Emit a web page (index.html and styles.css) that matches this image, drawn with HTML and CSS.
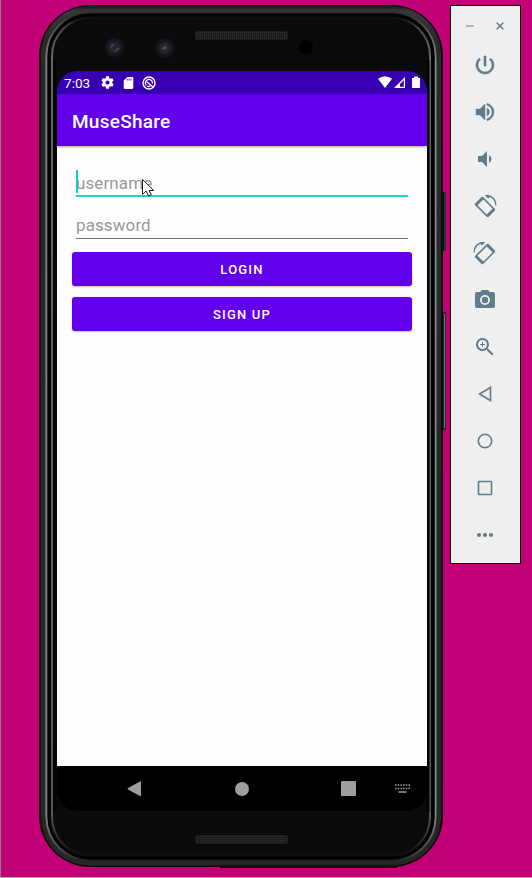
FILE: index.html
```html
<!DOCTYPE html>
<html lang="en">
<head>
<meta charset="utf-8">
<title>MuseShare</title>
<link rel="stylesheet" href="styles.css">
</head>
<body>
<main class="desktop">
  <section class="phone">
    <svg class="frame" viewBox="39 5 407 863" aria-hidden="true">
      <defs>
        <pattern id="mesh" width="2" height="2" patternUnits="userSpaceOnUse"><rect width="2" height="2" fill="#1c1c1c"/><rect width="1" height="1" fill="#303030"/></pattern>
        <linearGradient id="rim" gradientUnits="userSpaceOnUse" x1="0" y1="12" x2="0" y2="862"><stop offset="0" stop-color="#2c2c2c"/><stop offset=".012" stop-color="#484848"/><stop offset=".06" stop-color="#888"/><stop offset=".94" stop-color="#888"/><stop offset=".988" stop-color="#484848"/><stop offset="1" stop-color="#202020"/></linearGradient>
        <linearGradient id="inner" gradientUnits="userSpaceOnUse" x1="0" y1="17" x2="0" y2="857"><stop offset="0" stop-color="#0a0a0a"/><stop offset=".012" stop-color="#444"/><stop offset=".04" stop-color="#646468"/><stop offset=".95" stop-color="#555558"/><stop offset=".985" stop-color="#222"/><stop offset="1" stop-color="#0a0a0a"/></linearGradient>
        <linearGradient id="body" gradientUnits="userSpaceOnUse" x1="0" y1="5" x2="0" y2="868"><stop offset="0" stop-color="#141414"/><stop offset=".007" stop-color="#383838"/><stop offset=".04" stop-color="#292929"/><stop offset="1" stop-color="#262626"/></linearGradient>
      </defs>
      <rect x="441" y="192" width="5" height="59" rx="1" fill="#303030"/>
      <path d="M443.500 192v59" stroke="#111"/>
      <rect x="442" y="312" width="4" height="118" rx="1" fill="#252525"/>
      <path d="M444.500 314v114" stroke="#777"/>
      <rect x="39" y="5" width="404" height="862" rx="51" fill="#0c0c0c"/>
      <rect x="41" y="6" width="400" height="859.500" rx="49" fill="url(#body)"/>
      <rect x="46.500" y="12.500" width="389" height="848" rx="43.500" fill="#0a0a0a" stroke="url(#rim)" stroke-width="2"/>
      <rect x="49" y="15" width="384" height="843" rx="41" fill="none" stroke="#030303" stroke-width="3"/>
      <rect x="52" y="17.500" width="378" height="838" rx="38.500" fill="#0a0a0a" stroke="url(#inner)" stroke-width="2"/>
      <path d="M55 60V812M428 60V812" stroke="#040404" stroke-width="3"/>
      <path d="M220 867.500H397" stroke="#080808"/>
      <g fill="#14181c"><circle cx="114.500" cy="47.500" r="9.500"/><circle cx="165" cy="48" r="9.500"/></g>
      <g fill="#22262a"><circle cx="114.500" cy="47.500" r="6"/><circle cx="165" cy="48" r="6"/></g>
      <path d="M111 47l3-3M115 51l4-3M162 49l3-3" stroke="#4a535c" stroke-width="1.200"/>
      <circle cx="165" cy="48" r="2" fill="#484848"/>
      <circle cx="306" cy="47.500" r="7" fill="#000"/>
      <rect x="195" y="31" width="93" height="9" rx="3" fill="url(#mesh)"/>
      <rect x="195" y="835" width="93" height="9" rx="3" fill="url(#mesh)"/>
    </svg>
    <div class="screen">
      <header class="status">
        <span class="time">7:03</span>
        <svg class="s-icon gear" viewBox="2 2 20 20"><path d="M19.140 12.940c.040-.300.060-.610.060-.940s-.020-.640-.070-.940l2.030-1.580a.490.490 0 0 0 .120-.610l-1.920-3.320a.490.490 0 0 0-.590-.220l-2.390.960a7 7 0 0 0-1.620-.940L14.400 2.810a.480.480 0 0 0-.480-.410h-3.840c-.240 0-.430.170-.470.410l-.360 2.540c-.590.240-1.130.570-1.620.940l-2.390-.960a.480.480 0 0 0-.590.220L2.740 8.870a.480.480 0 0 0 .120.610l2.030 1.580a7.300 7.300 0 0 0 0 1.880l-2.030 1.580a.490.490 0 0 0-.120.610l1.920 3.320c.120.220.370.290.590.220l2.390-.960c.500.380 1.030.700 1.620.940l.360 2.540c.050.240.240.410.480.410h3.840c.240 0 .440-.170.470-.410l.360-2.540c.590-.240 1.130-.560 1.620-.940l2.390.960c.220.080.470 0 .590-.220l1.920-3.320a.480.480 0 0 0-.120-.610zM12 15.200a3.200 3.200 0 1 1 0-6.400 3.200 3.200 0 0 1 0 6.400z"/></svg>
        <svg class="s-icon sd" viewBox="4 2 16 20"><path fill-rule="evenodd" d="M18 2h-8L4 8v12c0 1.100.900 2 2 2h12c1.100 0 2-.900 2-2V4c0-1.100-.900-2-2-2zM9 5h1.500v3H9zm3.200 0h1.500v3h-1.500zm3 0h1.500v3h-1.500z"/></svg>
        <svg class="s-icon sync" viewBox="0 0 14 14"><circle cx="7" cy="7" r="6" fill="none" stroke="#fff" stroke-width="1.400"/><path d="M4.200 9.300A3.600 3.600 0 0 1 5 4 3.600 3.600 0 0 1 10.500 7.500M4.800 5.800L11 11M5 10Q6.500 11 8.300 10" fill="none" stroke="#fff" stroke-width="1.300"/></svg>
        <span class="spacer"></span>
        <svg class="signals" width="42" height="13" viewBox="0 0 42 13"><path d="M0 2.800Q7-2.200 14 2.800L7 12z"/><path fill-rule="evenodd" d="M27 1V12H16zM25.800 4L22 8v2.800H25.800z"/><path d="M34 2h2V.500h4V2h2v10h-8z"/></svg>
      </header>
      <div class="appbar"><h1>MuseShare</h1></div>
      <form class="login">
        <div class="field focused"><span>username</span></div>
        <div class="field"><span>password</span></div>
        <button type="button">LOGIN</button>
        <button type="button">SIGN UP</button>
        <svg class="cursor" viewBox="0 0 13 18"><path d="M.5.500V15.500L4 12L6.700 17L9.300 15.700L7 11.500H11.800Z" fill="#fff" stroke="#181818"/></svg>
      </form>
      <nav class="nav">
        <svg viewBox="0 0 14 16"><path d="M1 7L13 .500Q14 0 14 1V14.500Q14 15.500 13 15L1 8.500Q0 7.800 1 7z"/></svg>
        <svg viewBox="0 0 14 14"><circle cx="7" cy="7" r="7"/></svg>
        <svg viewBox="0 0 15 15"><rect width="15" height="15" rx="1"/></svg>
        <svg class="keyboard" viewBox="0 0 15 9"><path d="M0 1h15M0 4.500h15" stroke="#a0a0a0" stroke-width="1.300" stroke-dasharray="1.500 1.200"/><path d="M3.500 8h8" stroke="#a0a0a0" stroke-width="1.300"/></svg>
      </nav>
    </div>
  </section>
  <aside class="toolbar">
    <div class="window-controls">
      <svg viewBox="0 0 8 8"><path d="M0 4h8" stroke="#9badb7" stroke-width="1.600"/></svg>
      <svg viewBox="0 0 8 8"><path d="M.7.700l6.600 6.600M7.300.700L.7 7.300" stroke="#607d8b" stroke-width="1.500"/></svg>
    </div>
    <svg viewBox="0 0 24 24"><path d="M13 3h-2v10h2V3zm4.830 2.170l-1.420 1.420A6.920 6.920 0 0 1 19 12a7 7 0 1 1-11.420-5.420L6.170 5.170A9 9 0 1 0 21 12a9 9 0 0 0-3.170-6.830z" stroke="#607d8b" stroke-width=".6"/></svg>
    <svg viewBox="0 0 24 24"><path d="M3 9v6h4l5 5V4L7 9H3zm13.500 3A4.500 4.500 0 0 0 14 7.970v8.050A4.470 4.470 0 0 0 16.500 12zM14 3.230v2.060a7 7 0 0 1 0 13.420v2.060a9 9 0 0 0 0-17.540z" stroke="#607d8b" stroke-width=".5"/></svg>
    <svg viewBox="0 0 24 24"><path d="M18.500 12A4.500 4.500 0 0 0 16 7.970v8.050A4.470 4.470 0 0 0 18.500 12zM5 9v6h4l5 5V4L9 9H5z"/></svg>
    <svg class="rotate" viewBox="0 0 24 24"><g id="rotated"><g transform="translate(12 13) rotate(45)"><path fill-rule="evenodd" d="M-8.300-5.700H8.300Q9.500-5.700 9.500-4.500V4.500Q9.500 5.700 8.300 5.700H-8.300Q-9.500 5.700-9.500 4.500V-4.500Q-9.500-5.700-8.300-5.700zM-6.500-4.200V4.200H6.500V-4.200z"/></g><path d="M13 1.500Q22.400 2 22.900 11.500" fill="none" stroke="#607d8b" stroke-width="1.300"/><path d="M11.500 1.200L17 1.500L15.500 4.700z"/></g></svg>
    <svg class="rotate" viewBox="0 0 24 24"><use href="#rotated" transform="matrix(-1 0 0 1 24 0)"/></svg>
    <svg viewBox="0 0 24 24"><path d="M9 2L7.170 4H4c-1.100 0-2 .900-2 2v12c0 1.100.900 2 2 2h16c1.100 0 2-.900 2-2V6c0-1.100-.900-2-2-2h-3.170L15 2H9zm3 15a5 5 0 1 1 0-10 5 5 0 0 1 0 10z"/><circle cx="12" cy="12" r="3.200"/></svg>
    <svg viewBox="0 0 24 24"><path d="M15.500 14h-.790l-.280-.270A6.500 6.500 0 1 0 13.730 14.430l.270.280v.790l5 4.990L20.490 19zM9.500 14a4.500 4.500 0 1 1 0-9 4.500 4.500 0 0 1 0 9z"/><path d="M12 10h-2v2H9v-2H7V9h2V7h1v2h2z"/></svg>
    <svg viewBox="0 0 24 24"><path d="M17.500 5.500V18.500L6.500 12z" class="outline"/></svg>
    <svg viewBox="0 0 24 24"><circle cx="12" cy="12" r="6.700" class="outline"/></svg>
    <svg viewBox="0 0 24 24"><rect x="5.500" y="5.500" width="13" height="13" rx=".5" class="outline"/></svg>
    <svg viewBox="0 0 24 24"><circle cx="6" cy="12" r="2.100"/><circle cx="12" cy="12" r="2.100"/><circle cx="18" cy="12" r="2.100"/></svg>
  </aside>
</main>
</body>
</html>
```
FILE: styles.css
```css
* { box-sizing: border-box; }
body { margin: 0; font-family: Roboto, "Liberation Sans", sans-serif; }
.desktop {
  display: flex;
  align-items: flex-start;
  width: 532px;
  height: 878px;
  padding: 5px 11px 0 38px;
  background: #c10078;
  border-left: 1px solid #858585;
  border-bottom: 1px solid #c4a0b6;
}
.phone { position: relative; width: 404px; height: 863px; padding: 66px 16px 52px 18px; }
.frame { position: absolute; left: 0; top: 0; width: 407px; height: 863px; }
.screen {
  position: relative;
  display: flex;
  flex-direction: column;
  height: 740px;
  border-radius: 21px;
  overflow: hidden;
  background: linear-gradient(#3700b3 0 60px, #fefefe 60px 680px, #000 680px);
}
.status { display: flex; align-items: center; height: 23px; padding: 0 7px; background: #3700b3; color: #fff; }
.status svg { fill: #fff; }
.time { width: 37px; font-size: 13.6px; }
.s-icon { height: 13px; }
.gear { width: 13px; }
.sd { width: 11px; height: 12px; margin-left: 9px; }
.sync { width: 14px; height: 14px; margin-left: 8px; }
.spacer { flex: 1; }
.appbar {
  z-index: 1;
  display: flex;
  align-items: center;
  height: 52px;
  padding: 2px 15px 0;
  background: #6200ee;
  color: #fff;
  box-shadow: 0 1px 2px rgba(0, 0, 0, .35);
}
h1 { margin: 0; font-size: 19px; font-weight: 500; letter-spacing: .25px; }
.login { position: relative; display: flex; flex: 1; flex-direction: column; padding: 21px 15px 0; background: #fefefe; }
.field {
  display: flex;
  align-items: center;
  height: 26px;
  margin: 0 4px 17px;
  border-bottom: 1px solid #747474;
  color: #999;
  font-size: 17px;
  letter-spacing: .1px;
}
.field + .field { height: 26px; margin-bottom: 13px; padding-bottom: 1px; }
.field.focused { height: 30px; margin-bottom: 16px; padding: 3px 0 0; border-bottom: 2px solid #1bd6c7; }
.focused::before { content: ""; width: 2px; height: 23px; margin: -2px -2px 0 0; background: #03dac5; }
button {
  height: 34px;
  margin: 0 0 11px;
  padding: 1px 0 0;
  border: 0;
  border-radius: 3px;
  background: #6200ee;
  box-shadow: 0 1px 2px rgba(0, 0, 0, .25);
  color: #fff;
  font: 500 13px Roboto, "Liberation Sans", sans-serif;
  letter-spacing: 1.2px;
}
.cursor { position: absolute; left: 85px; top: 33px; width: 13px; height: 18px; }
.nav { display: flex; align-items: center; height: 45px; padding-left: 70px; background: #000; }
.nav svg { width: 14px; height: 16px; fill: #9e9e9e; }
.nav svg:nth-child(2) { width: 14px; height: 14px; margin-left: 94px; }
.nav svg:nth-child(3) { width: 15px; height: 15px; margin-left: 92px; }
.nav .keyboard { width: 15px; height: 9px; margin-left: 39px; }
.toolbar {
  display: flex;
  flex-direction: column;
  align-items: center;
  gap: 23px;
  width: 71px;
  height: 559px;
  margin-left: 7px;
  padding: 16px 1px 0 0;
  background: #efefef;
  border: 1px solid #000;
}
.toolbar > svg { flex: none; width: 24px; height: 24px; fill: #607d8b; }
.toolbar .outline { fill: none; stroke: #607d8b; stroke-width: 1.6; }
.window-controls { display: flex; gap: 22px; height: 8px; }
.window-controls svg { width: 8px; height: 8px; }
```
